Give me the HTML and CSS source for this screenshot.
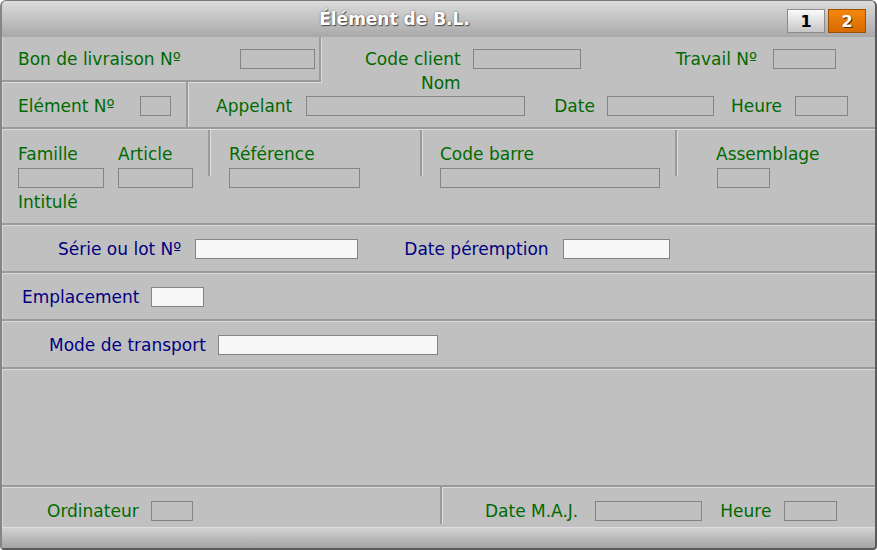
FILE: index.html
```html
<!DOCTYPE html>
<html lang="fr">
<head>
<meta charset="utf-8">
<title>Élément de B.L.</title>
<link rel="stylesheet" href="styles.css">
</head>
<body>
<div class="window">
  <header class="titlebar">
    <div class="title">Élément de B.L.</div>
    <div class="tabs">
      <span class="tab">1</span>
      <span class="tab active">2</span>
    </div>
  </header>
  <main class="content">
    <section class="top">
      <div class="cell bon">
        <span class="lbl">Bon de livraison Nº</span>
        <span class="fld bon-f"></span>
      </div>
      <div class="cell client">
        <div class="stack">
          <span class="lbl">Code client</span>
          <span class="lbl">Nom</span>
        </div>
        <span class="fld client-f"></span>
        <span class="lbl travail-l">Travail Nº</span>
        <span class="fld travail-f"></span>
      </div>
      <div class="cell elem">
        <span class="lbl">Elément Nº</span>
        <span class="fld elem-f"></span>
      </div>
      <div class="cell appel">
        <span class="lbl">Appelant</span>
        <span class="fld appel-f"></span>
        <span class="lbl date-l">Date</span>
        <span class="fld date-f"></span>
        <span class="lbl heure-l">Heure</span>
        <span class="fld heure-f"></span>
      </div>
    </section>

    <section class="row3">
      <div class="col c-fam">
        <div class="pair">
          <div class="group">
            <span class="lbl">Famille</span>
            <span class="fld fam-f"></span>
          </div>
          <div class="group art">
            <span class="lbl">Article</span>
            <span class="fld art-f"></span>
          </div>
        </div>
        <span class="lbl intitule">Intitulé</span>
      </div>
      <div class="vsep"></div>
      <div class="col c-ref">
        <div class="group">
          <span class="lbl">Référence</span>
          <span class="fld ref-f"></span>
        </div>
      </div>
      <div class="vsep"></div>
      <div class="col c-bar">
        <div class="group">
          <span class="lbl">Code barre</span>
          <span class="fld bar-f"></span>
        </div>
      </div>
      <div class="vsep"></div>
      <div class="col c-asm">
        <div class="group">
          <span class="lbl">Assemblage</span>
          <span class="fld asm-f"></span>
        </div>
      </div>
    </section>

    <section class="brow serie">
      <span class="lbl blue">Série ou lot Nº</span>
      <span class="fld white serie-f"></span>
      <span class="lbl blue peremp-l">Date péremption</span>
      <span class="fld white peremp-f"></span>
    </section>

    <section class="brow empl">
      <span class="lbl blue">Emplacement</span>
      <span class="fld white empl-f"></span>
    </section>

    <section class="brow mode">
      <span class="lbl blue">Mode de transport</span>
      <span class="fld white mode-f"></span>
    </section>

    <section class="empty"></section>

    <section class="footer">
      <div class="fcell fleft">
        <span class="lbl">Ordinateur</span>
        <span class="fld ordi-f"></span>
      </div>
      <div class="fcell fright">
        <span class="lbl">Date M.A.J.</span>
        <span class="fld maj-f"></span>
        <span class="lbl fheure-l">Heure</span>
        <span class="fld fheure-f"></span>
      </div>
    </section>

    <div class="bottombar"></div>
  </main>
</div>
</body>
</html>
```

FILE: styles.css
```css
* {
  box-sizing: border-box;
}

html, body {
  margin: 0;
  padding: 0;
  background: #ffffff;
}

body {
  font-family: "DejaVu Sans", Verdana, sans-serif;
  font-size: 17px;
}

.window {
  width: 877px;
  height: 550px;
  border-top: 1px solid #7a7a7a;
  border-left: 2px solid #858585;
  border-right: 2px solid #5a5a5a;
  border-bottom: 2px solid #5a5a5a;
  border-radius: 6px 6px 4px 4px;
  overflow: hidden;
  display: flex;
  flex-direction: column;
  background: #c0c0c0;
}

/* Title bar */
.titlebar {
  height: 36px;
  flex: none;
  display: flex;
  align-items: flex-start;
  background: linear-gradient(#dcdcdc, #a8a8a8);
}

.title {
  flex: 1;
  height: 36px;
  line-height: 36px;
  text-align: center;
  color: #ffffff;
  font-weight: bold;
  font-size: 17px;
  text-shadow: 1px 1px 1px #4a4a4a, 0 0 2px #6a6a6a;
}

.tabs {
  display: flex;
  gap: 3px;
  padding-top: 8px;
  padding-right: 9px;
}

.tab {
  width: 38px;
  height: 24px;
  display: flex;
  align-items: center;
  justify-content: center;
  font-weight: bold;
  font-size: 16px;
  color: #000000;
  border: 1px solid #8c8c8c;
  background: linear-gradient(#fbfbfb, #c6c6c6);
}

.tab.active {
  color: #ffffff;
  border-color: #9a5200;
  background: linear-gradient(#f4860f, #d86a00);
  text-shadow: 1px 1px 0 #5a2e00;
}

/* Content */
.content {
  flex: 1;
  display: flex;
  flex-direction: column;
  box-shadow: inset 1px 0 0 #d6d6d6;
}

.lbl {
  line-height: 24px;
  color: #006a00;
  white-space: nowrap;
}

.lbl.blue {
  color: #000080;
}

.fld {
  display: block;
  height: 20px;
  flex: none;
  border: 1px solid #848484;
  background: transparent;
}

.fld.white {
  background: #f7f7f7;
}

/* Top grid */
.top {
  height: 92px;
  flex: none;
  display: grid;
  grid-template-columns: 186px 133px 1fr;
  grid-template-rows: 45px 45px;
  border-bottom: 2px solid #9a9a9a;
  box-shadow: 0 1px 0 #dcdcdc;
}

.cell {
  display: flex;
  align-items: center;
  min-width: 0;
}

.bon {
  grid-column: 1 / 3;
  grid-row: 1;
  border-right: 2px solid #9a9a9a;
  border-bottom: 2px solid #9a9a9a;
  box-shadow: 1px 1px 0 #dcdcdc;
  padding: 0 4px 0 16px;
}

.bon-f {
  width: 75px;
  margin-left: auto;
}

.client {
  grid-column: 3;
  grid-row: 1;
  align-items: flex-start;
  padding: 10px 39px 0 44px;
}

.stack {
  display: flex;
  flex-direction: column;
  align-items: flex-end;
}

.client-f {
  width: 108px;
  margin: 2px 0 0 12px;
}

.travail-l {
  margin-left: auto;
  padding-right: 2px;
}

.travail-f {
  width: 63px;
  margin: 2px 0 0 14px;
}

.elem {
  grid-column: 1;
  grid-row: 2;
  border-right: 2px solid #9a9a9a;
  box-shadow: 1px 0 0 #dcdcdc;
  padding: 3px 15px 0 16px;
}

.elem-f {
  width: 31px;
  margin-left: auto;
}

.appel {
  grid-column: 2 / 4;
  grid-row: 2;
  padding: 3px 27px 0 28px;
}

.appel-f {
  width: 219px;
  margin-left: 14px;
}

.date-l {
  margin-left: 29px;
}

.date-f {
  width: 107px;
  margin-left: 12px;
}

.heure-l {
  margin-left: auto;
}

.heure-f {
  width: 53px;
  margin-left: 13px;
}

/* Row 3 */
.row3 {
  height: 96px;
  flex: none;
  display: flex;
  align-items: flex-start;
  border-bottom: 2px solid #9a9a9a;
  box-shadow: 0 1px 0 #dcdcdc;
}

.col {
  padding-top: 13px;
  display: flex;
  flex-direction: column;
}

.vsep {
  width: 2px;
  height: 46px;
  margin-top: 1px;
  background: #9a9a9a;
  box-shadow: 1px 0 0 #dcdcdc;
  flex: none;
}

.c-fam {
  width: 206px;
  padding-left: 16px;
}

.c-ref {
  width: 210px;
  padding-left: 19px;
}

.c-bar {
  width: 253px;
  padding-left: 18px;
}

.c-asm {
  flex: 1;
  padding-left: 39px;
}

.pair {
  display: flex;
}

.group {
  display: flex;
  flex-direction: column;
  align-items: flex-start;
}

.group .fld {
  margin-top: 2px;
}

.art {
  margin-left: 14px;
}

.fam-f { width: 86px; }
.art-f { width: 75px; }
.ref-f { width: 131px; }
.bar-f { width: 220px; }
.asm-f { width: 53px; margin-left: 1px; }

.intitule {
  margin-top: 2px;
}

/* Blue rows */
.brow {
  height: 48px;
  flex: none;
  display: flex;
  align-items: center;
  padding-top: 2px;
  border-bottom: 2px solid #9a9a9a;
  box-shadow: 0 1px 0 #dcdcdc;
}

.serie {
  padding-left: 56px;
}

.serie-f {
  width: 163px;
  margin-left: 14px;
}

.peremp-l {
  margin-left: 46px;
}

.peremp-f {
  width: 107px;
  margin-left: 14px;
}

.empl {
  padding-left: 20px;
}

.empl-f {
  width: 53px;
  margin-left: 11px;
}

.mode {
  padding-left: 47px;
}

.mode-f {
  width: 220px;
  margin-left: 12px;
}

.empty {
  height: 118px;
  flex: none;
  border-bottom: 2px solid #9a9a9a;
  box-shadow: 0 1px 0 #dcdcdc;
}

/* Footer */
.footer {
  height: 40px;
  flex: none;
  display: flex;
  align-items: flex-start;
}

.fcell {
  height: 37px;
  display: flex;
  align-items: center;
  padding-top: 10px;
}

.fleft {
  width: 440px;
  padding-left: 45px;
  border-right: 2px solid #9a9a9a;
  box-shadow: 1px 0 0 #dcdcdc;
}

.ordi-f {
  width: 42px;
  margin-left: 12px;
}

.fright {
  flex: 1;
  padding-left: 43px;
}

.maj-f {
  width: 107px;
  margin-left: 17px;
}

.fheure-l {
  margin-left: 18px;
}

.fheure-f {
  width: 53px;
  margin-left: 13px;
}

.bottombar {
  height: 21px;
  flex: none;
  background: linear-gradient(#d4d4d4, #a4a4a4);
  box-shadow: inset 0 1px 0 #dedede;
}
```
